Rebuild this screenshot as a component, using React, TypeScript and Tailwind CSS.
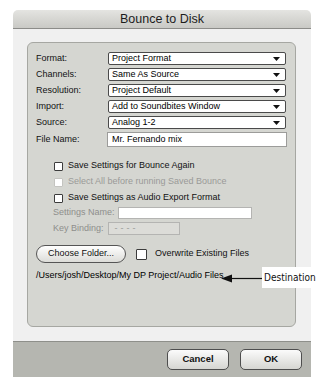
import React from 'react';

const ui = { fontFamily: '"Liberation Sans", Arial, sans-serif' };

const PopupRow: React.FC<{ label: string; value: string }> = ({ label, value }) => (
  <div className="flex items-center h-[13px]">
    <span className="w-[72px] text-[9px] text-[#111]">{label}</span>
    <div className="flex items-center justify-between w-[178px] h-[13px] bg-white border border-[#4a4a4a] rounded-[2px] pl-[3px] pr-[5px]">
      <span className="text-[9px] text-[#000] leading-none">{value}</span>
      <svg width="7" height="4" viewBox="0 0 7 4">
        <path d="M0 0 H7 L3.5 4 Z" fill="#111" />
      </svg>
    </div>
  </div>
);

const CheckRow: React.FC<{ label: string; disabled?: boolean }> = ({ label, disabled }) => (
  <div className="flex items-center gap-[5px] h-[12px]">
    <div
      className={
        disabled
          ? 'w-[9px] h-[9px] bg-white border border-[#c4c4c0] rounded-[1px]'
          : 'w-[9px] h-[9px] bg-white border border-[#3c3c3c] rounded-[1px]'
      }
    />
    <span className={disabled ? 'text-[9px] text-[#9a9a98]' : 'text-[9px] text-[#111]'}>{label}</span>
  </div>
);

export default function App() {
  return (
    <div className="relative w-[334px] h-[386px] bg-white overflow-hidden" style={ui}>
      <div className="ml-[13px] pt-[10px] w-[298px]">
        {/* title bar */}
        <div className="h-[19px] rounded-t-[5px] bg-gradient-to-b from-[#e4e4e1] to-[#c9c9c5] border-b border-[#8c8c89] flex items-center justify-center">
          <span className="text-[12.5px] text-[#1c1c1c] leading-none">Bounce to Disk</span>
        </div>

        {/* body */}
        <div className="bg-[#f0f0f0] pt-[13px] pb-[14px] pl-[14px] pr-[15px]">
          <div className="h-[285px] rounded-[6px] border border-[#a6a7a2] bg-[#d5d6d1] pl-[8px] pt-[9px]">
            <div className="flex flex-col gap-[3px]">
              <PopupRow label="Format:" value="Project Format" />
              <PopupRow label="Channels:" value="Same As Source" />
              <PopupRow label="Resolution:" value="Project Default" />
              <PopupRow label="Import:" value="Add to Soundbites Window" />
              <PopupRow label="Source:" value="Analog 1-2" />
              <div className="flex items-center h-[15px]">
                <span className="w-[71px] text-[9px] text-[#111]">File Name:</span>
                <div className="flex items-center w-[180px] h-[15px] bg-white border border-[#9c9c9a] pl-[4px]">
                  <span className="text-[9px] text-[#000]">Mr. Fernando mix</span>
                </div>
              </div>
            </div>

            <div className="flex flex-col gap-[4px] pl-[18px] mt-[13px]">
              <CheckRow label="Save Settings for Bounce Again" />
              <CheckRow label="Select All before running Saved Bounce" disabled />
              <CheckRow label="Save Settings as Audio Export Format" />
            </div>

            <div className="flex flex-col gap-[3px] pl-[17px] mt-[3px]">
              <div className="flex items-center gap-[3px] h-[12px]">
                <span className="text-[9px] text-[#8e8e8c]">Settings Name:</span>
                <div className="w-[134px] h-[12px] bg-white border border-[#b4b4b2]" />
              </div>
              <div className="flex items-center gap-[4px] h-[13px]">
                <span className="text-[9px] text-[#8e8e8c]">Key Binding:</span>
                <div className="flex items-center w-[72px] h-[13px] bg-[#dcdcd8] border border-[#b4b4b2] pl-[6px]">
                  <span className="text-[9px] text-[#9a9a98] tracking-[3px]">----</span>
                </div>
              </div>
            </div>

            <div className="flex items-center mt-[10px]">
              <div className="flex items-center justify-center w-[90px] h-[18px] rounded-full border border-[#555] bg-gradient-to-b from-[#ffffff] to-[#dcdcd8]">
                <span className="text-[9px] text-[#111]">Choose Folder...</span>
              </div>
              <div className="ml-[10px] w-[11px] h-[11px] bg-white border border-[#3c3c3c] rounded-[1px]" />
              <span className="ml-[8px] text-[9px] text-[#111]">Overwrite Existing Files</span>
            </div>

            <div className="flex items-center mt-[7px] h-[12px]">
              <span className="text-[9px] text-[#000]">/Users/josh/Desktop/My DP Project/Audio Files</span>
            </div>
          </div>
        </div>

        {/* bottom bar */}
        <div className="h-[36px] bg-[#b5b6b0] border-t border-[#8e8f8a] flex items-center justify-end gap-[11px] pr-[9px]">
          <div className="flex items-center justify-center w-[62px] h-[21px] rounded-[5px] border border-[#4e4e4e] bg-gradient-to-b from-[#fbfbfb] to-[#d6d6d2]">
            <span className="text-[9.5px] font-bold text-[#111]">Cancel</span>
          </div>
          <div className="flex items-center justify-center w-[62px] h-[21px] rounded-[5px] border border-[#4e4e4e] bg-gradient-to-b from-[#fbfbfb] to-[#d6d6d2]">
            <span className="text-[9.5px] font-bold text-[#111]">OK</span>
          </div>
        </div>
      </div>

      {/* annotation callout */}
      <svg className="absolute left-[221px] top-[274px]" width="42" height="9" viewBox="0 0 42 9">
        <path d="M0 4.5 L11 0.5 L11 8.5 Z" fill="#111" />
        <path d="M10 4.5 H42" stroke="#111" strokeWidth="1.2" />
      </svg>
      <div className="absolute left-[262px] top-[267px] w-[72px] h-[21px] bg-white flex items-center pl-[2px]">
        <span
          className="text-[10px] text-[#111] leading-none"
          style={{ fontFamily: '"DejaVu Sans Condensed", "Liberation Sans", sans-serif' }}
        >
          Destination
        </span>
      </div>
    </div>
  );
}
